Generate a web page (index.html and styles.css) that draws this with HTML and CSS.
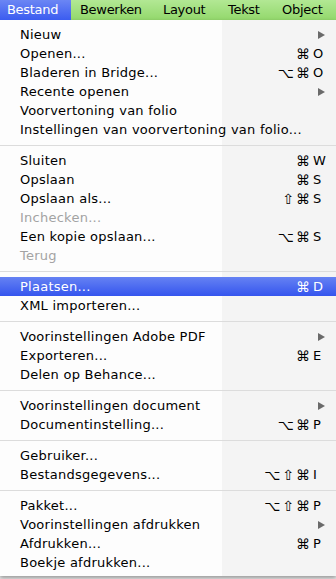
FILE: index.html
```html
<!DOCTYPE html>
<html lang="nl">
<head>
    <meta charset="UTF-8" />
    <title>Bestand</title>
    <link rel="stylesheet" href="styles.css">
</head>
<body>
    <!-- Menu bar -->
    <div class="menubar">
        <span class="title t-bestand active">Bestand</span>
        <span class="title t-bewerken">Bewerken</span>
        <span class="title t-layout">Layout</span>
        <span class="title t-tekst">Tekst</span>
        <span class="title t-object">Object</span>
    </div>

    <!-- Bestand menu -->
    <ul class="menu">
        <li class="item"><span class="label">Nieuw</span><span class="arrow"></span></li>
        <li class="item"><span class="label">Openen...</span><span class="keys"><span class="mods">⌘</span><span class="key">O</span></span></li>
        <li class="item"><span class="label">Bladeren in Bridge...</span><span class="keys"><span class="mods">⌥⌘</span><span class="key">O</span></span></li>
        <li class="item"><span class="label">Recente openen</span><span class="arrow"></span></li>
        <li class="item"><span class="label">Voorvertoning van folio</span></li>
        <li class="item"><span class="label">Instellingen van voorvertoning van folio...</span></li>
        <li class="sep"></li>
        <li class="item"><span class="label">Sluiten</span><span class="keys"><span class="mods">⌘</span><span class="key">W</span></span></li>
        <li class="item"><span class="label">Opslaan</span><span class="keys"><span class="mods">⌘</span><span class="key">S</span></span></li>
        <li class="item"><span class="label">Opslaan als...</span><span class="keys"><span class="mods">⇧⌘</span><span class="key">S</span></span></li>
        <li class="item disabled"><span class="label">Inchecken...</span></li>
        <li class="item"><span class="label">Een kopie opslaan...</span><span class="keys"><span class="mods">⌥⌘</span><span class="key">S</span></span></li>
        <li class="item disabled"><span class="label">Terug</span></li>
        <li class="sep"></li>
        <li class="item selected"><span class="label">Plaatsen...</span><span class="keys"><span class="mods">⌘</span><span class="key">D</span></span></li>
        <li class="item"><span class="label">XML importeren...</span></li>
        <li class="sep"></li>
        <li class="item"><span class="label">Voorinstellingen Adobe PDF</span><span class="arrow"></span></li>
        <li class="item"><span class="label">Exporteren...</span><span class="keys"><span class="mods">⌘</span><span class="key">E</span></span></li>
        <li class="item"><span class="label">Delen op Behance...</span></li>
        <li class="sep"></li>
        <li class="item"><span class="label">Voorinstellingen document</span><span class="arrow"></span></li>
        <li class="item"><span class="label">Documentinstelling...</span><span class="keys"><span class="mods">⌥⌘</span><span class="key">P</span></span></li>
        <li class="sep"></li>
        <li class="item"><span class="label">Gebruiker...</span></li>
        <li class="item"><span class="label">Bestandsgegevens...</span><span class="keys"><span class="mods">⌥⇧⌘</span><span class="key">I</span></span></li>
        <li class="sep"></li>
        <li class="item"><span class="label">Pakket...</span><span class="keys"><span class="mods">⌥⇧⌘</span><span class="key">P</span></span></li>
        <li class="item"><span class="label">Voorinstellingen afdrukken</span><span class="arrow"></span></li>
        <li class="item"><span class="label">Afdrukken...</span><span class="keys"><span class="mods">⌘</span><span class="key">P</span></span></li>
        <li class="item"><span class="label">Boekje afdrukken...</span></li>
    </ul>
</body>
</html>
```

FILE: styles.css
```css
/* Page */
body {
    margin: 0;
    padding: 0;
    font-family: 'DejaVu Sans', 'Liberation Sans', sans-serif;
    background: #e8e8e8;
    width: 336px;
    height: 579px;
    overflow: hidden;
}

/* Menu bar across the top */
.menubar {
    display: flex;
    height: 20px;
    background: linear-gradient(#b2e894, #93d86c);
    font-size: 13px;
    letter-spacing: -0.3px;
    line-height: 20px;
    color: #000;
}

.title {
    flex: none;
    box-sizing: border-box;
    white-space: nowrap;
}

.t-bestand  { width: 71px; padding-left: 7px; }
.t-bewerken { width: 84px; padding-left: 9px; }
.t-layout   { width: 65px; padding-left: 8px; }
.t-tekst    { width: 55px; padding-left: 8px; }
.t-object   { width: 61px; padding-left: 7px; }

.title.active {
    color: #fff;
    background: linear-gradient(#6b86f4, #3b5cf0);
}

/* Dropdown menu */
.menu {
    list-style: none;
    margin: 0;
    padding: 5px 0 4px;
    background: linear-gradient(90deg, #fdfdfd 0, #fdfdfd 222px, #f4f4f4 222px);
    box-shadow: 0 2px 4px rgba(0, 0, 0, 0.35);
    font-size: 13px;
    letter-spacing: 0.25px;
    color: #000;
}

.item {
    display: flex;
    align-items: center;
    height: 19px;
    padding: 0 10px 0 20px;
}

.label {
    flex: 1;
    white-space: nowrap;
}

.item.disabled {
    color: #a3a3a3;
}

.item.selected {
    color: #fff;
    background: linear-gradient(#6582f3, #3555ee);
}

/* Keyboard shortcuts: modifiers right aligned, key in its own column */
.keys {
    display: flex;
}

.mods {
    text-align: right;
    font-size: 14px;
    letter-spacing: 2px;
}

.key {
    width: 13px;
    padding-left: 1px;
}

/* Submenu triangle */
.arrow {
    width: 0;
    height: 0;
    margin-right: 1px;
    border-top: 4px solid transparent;
    border-bottom: 4px solid transparent;
    border-left: 7px solid #6a6a6a;
}

.sep {
    height: 1px;
    margin: 6px 0 5px;
    background: #dcdcdc;
}
```
